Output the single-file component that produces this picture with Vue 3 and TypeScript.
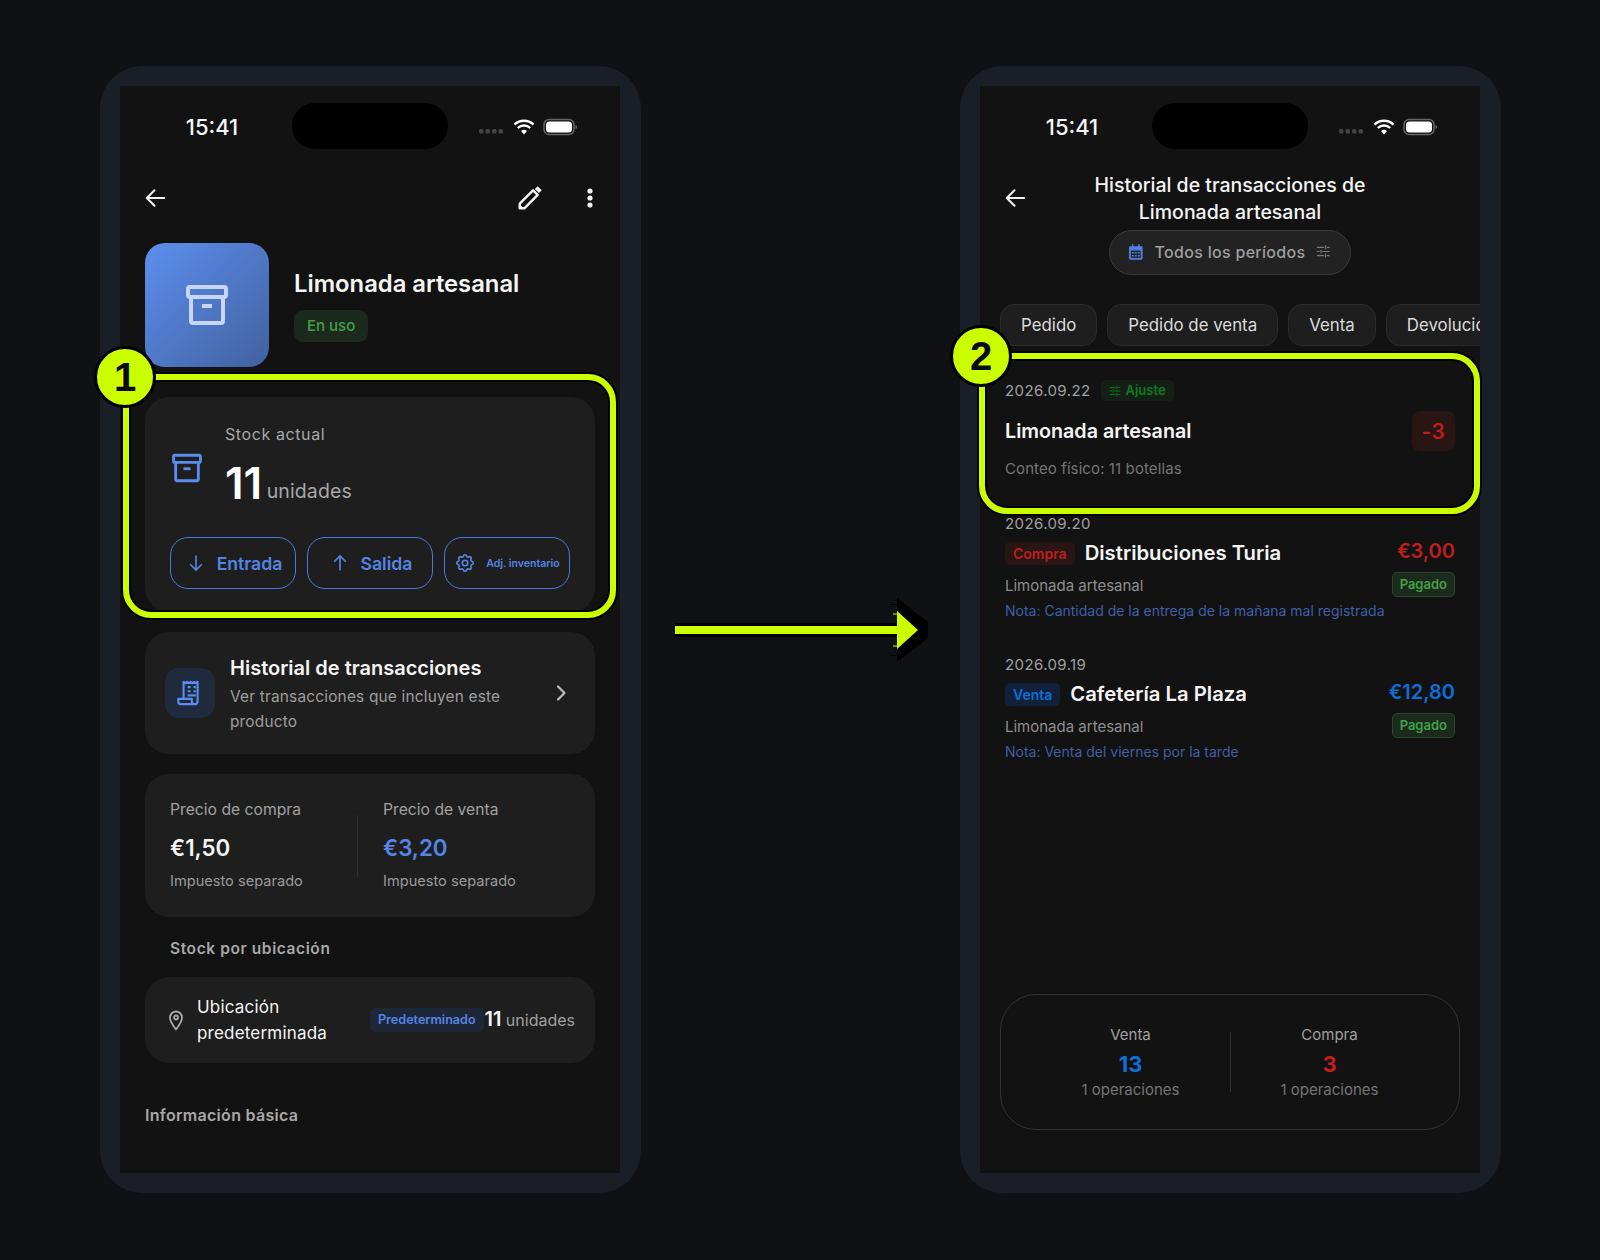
<script setup lang="ts">
// Dos pantallas del inventario con anotaciones encima
const tabs = ["Pedido", "Pedido de venta", "Venta", "Devolución"];

const moves = [
  {
    date: "2026.09.20",
    kind: "Compra",
    tone: "red",
    name: "Distribuciones Turia",
    amount: "€3,00",
    note: "Nota: Cantidad de la entrega de la mañana mal registrada",
  },
  {
    date: "2026.09.19",
    kind: "Venta",
    tone: "blue",
    name: "Cafetería La Plaza",
    amount: "€12,80",
    note: "Nota: Venta del viernes por la tarde",
  },
];

const totals = [
  { label: "Venta", value: "13", tone: "blue" },
  { label: "Compra", value: "3", tone: "red" },
];
</script>

<template>
  <div class="page">
    <svg class="sprites" width="0" height="0" aria-hidden="true">
      <symbol id="i-archive" viewBox="0 0 24 24" fill="none" stroke="currentColor" stroke-width="2" stroke-linejoin="round">
        <rect x="2.5" y="3" width="19" height="5" rx="1" />
        <path d="M4 8v12a1 1 0 0 0 1 1h14a1 1 0 0 0 1-1V8" />
        <path d="M9.5 12.5h5" />
      </symbol>
      <symbol id="i-back" viewBox="0 0 24 24" fill="none" stroke="currentColor" stroke-width="2.2" stroke-linecap="round" stroke-linejoin="round">
        <path d="M22 12H3M11.5 3.5 3 12l8.5 8.5" />
      </symbol>
      <symbol id="i-sliders" viewBox="0 0 16 16" fill="none" stroke="currentColor" stroke-width="1.3">
        <path d="M1 3.5h8M12 3.5h3M1 8h3M7 8h8M1 12.5h8M12 12.5h3" />
        <path d="M10.5 1.5v4M5.5 6v4M10.5 10.5v4" />
      </symbol>
      <symbol id="i-status" viewBox="0 0 98 18">
        <g fill="#444">
          <rect x="0" y="11" width="4.5" height="4.5" rx="1.5" />
          <rect x="6.5" y="11" width="4.5" height="4.5" rx="1.5" />
          <rect x="13" y="11" width="4.5" height="4.5" rx="1.5" />
          <rect x="19.5" y="11" width="4.5" height="4.5" rx="1.5" />
        </g>
        <g fill="none" stroke="#fff" stroke-width="2.4">
          <path d="M35.5 6.5a14 14 0 0 1 19 0" />
          <path d="M38.8 10a9 9 0 0 1 12.4 0" />
        </g>
        <path d="M45 16.5l-3-3.4a4.5 4.5 0 0 1 6 0z" fill="#fff" />
        <rect x="65" y="1.5" width="30" height="15" rx="5" fill="none" stroke="#666" stroke-width="1.5" />
        <rect x="67" y="3.5" width="26" height="11" rx="3.5" fill="#fff" />
        <path d="M96.5 7v4c1-.3 1.5-1 1.5-2s-.5-1.7-1.5-2z" fill="#666" />
      </symbol>
    </svg>

    <section class="phone">
      <div class="screen">
        <div class="status">
          <span class="time">15:41</span>
          <span class="island"></span>
          <span class="indicators"><svg width="98" height="18"><use href="#i-status" /></svg></span>
        </div>

        <div class="content">
          <header class="nav">
            <svg class="back" width="22" height="22"><use href="#i-back" /></svg>
            <svg class="pencil" width="26" height="26" viewBox="0 0 24 24" fill="none" stroke="#f2f2f2" stroke-width="2.2" stroke-linejoin="round">
              <path d="M2.5 21.5v-4.3L14.8 4.9l4.3 4.3L6.8 21.5z" />
              <path d="M2.5 21.5v-3l3 3z" fill="#f2f2f2" stroke-width="1" />
              <path d="M17.8 2.4l3.8 3.8" stroke-width="3.6" />
            </svg>
            <svg class="more" width="6" height="20" viewBox="0 0 6 20" fill="#f2f2f2">
              <circle cx="3" cy="3" r="2.6" />
              <circle cx="3" cy="10" r="2.6" />
              <circle cx="3" cy="17" r="2.6" />
            </svg>
          </header>

          <div class="product">
            <div class="tile"><svg width="48" height="48"><use href="#i-archive" /></svg></div>
            <div>
              <h1>Limonada artesanal</h1>
              <span class="in-use">En uso</span>
            </div>
          </div>

          <div class="card stock">
            <div class="stock-top">
              <svg class="stock-icon" width="34" height="34"><use href="#i-archive" /></svg>
              <div>
                <div class="stock-label">Stock actual</div>
                <div class="stock-count"><b>11</b> <span>unidades</span></div>
              </div>
            </div>
            <div class="actions">
              <button>
                <svg width="20" height="20" viewBox="0 0 24 24" fill="none" stroke="currentColor" stroke-width="2"><path d="M12 3v17M5 13.5l7 7 7-7" /></svg>
                Entrada
              </button>
              <button>
                <svg width="20" height="20" viewBox="0 0 24 24" fill="none" stroke="currentColor" stroke-width="2"><path d="M12 21V4M5 10.5l7-7 7 7" /></svg>
                Salida
              </button>
              <button class="adjust">
                <svg width="22" height="22" viewBox="0 0 24 24" fill="none" stroke="currentColor" stroke-width="1.8">
                  <path d="M10.325 4.317c.426-1.756 2.924-1.756 3.35 0a1.724 1.724 0 0 0 2.573 1.066c1.543-.94 3.31.826 2.37 2.37a1.724 1.724 0 0 0 1.065 2.572c1.756.426 1.756 2.924 0 3.35a1.724 1.724 0 0 0-1.066 2.573c.94 1.543-.826 3.31-2.37 2.37a1.724 1.724 0 0 0-2.572 1.065c-.426 1.756-2.924 1.756-3.35 0a1.724 1.724 0 0 0-2.573-1.066c-1.543.94-3.31-.826-2.37-2.37a1.724 1.724 0 0 0-1.065-2.572c-1.756-.426-1.756-2.924 0-3.35a1.724 1.724 0 0 0 1.066-2.573c-.94-1.543.826-3.31 2.37-2.37 1 .608 2.296.07 2.572-1.065z" />
                  <circle cx="12" cy="12" r="3" />
                </svg>
                Adj. inventario
              </button>
            </div>
          </div>

          <div class="card history">
            <div class="history-icon">
              <svg width="28" height="28" viewBox="0 0 24 24" fill="none" stroke="#5b8def" stroke-width="1.8" stroke-linejoin="round">
                <path d="M6.5 17V2.5l1.5 1 1.5-1 1.5 1 1.5-1 1.5 1 1.5-1 1.5 1 1.5-1v16.5a2.5 2.5 0 0 1-5 0V17H2v2.5A2 2 0 0 0 4 21.5h14" />
                <path d="M10 7h2.5M10 10.5h2.5M15 7h2M15 10.5h2M10 14h7" />
              </svg>
            </div>
            <div class="history-text">
              <h2>Historial de transacciones</h2>
              <p>Ver transacciones que incluyen este producto</p>
            </div>
            <svg class="chevron" width="14" height="18" viewBox="0 0 14 18" fill="none" stroke="#bdbdbd" stroke-width="2.2" stroke-linecap="round" stroke-linejoin="round">
              <path d="M4 2.5 10.5 9 4 15.5" />
            </svg>
          </div>

          <div class="card prices">
            <div class="price">
              <div class="price-label">Precio de compra</div>
              <div class="price-value">€1,50</div>
              <div class="price-note">Impuesto separado</div>
            </div>
            <i class="price-rule"></i>
            <div class="price">
              <div class="price-label">Precio de venta</div>
              <div class="price-value accent">€3,20</div>
              <div class="price-note">Impuesto separado</div>
            </div>
          </div>

          <h3 class="by-place">Stock por ubicación</h3>

          <div class="card place">
            <svg width="18" height="22" viewBox="0 0 18 22" fill="none" stroke="#a8a8a8" stroke-width="1.8">
              <path d="M9 20.5C5.5 16 3 12.8 3 8.5a6 6 0 0 1 12 0c0 4.3-2.5 7.5-6 12z" stroke-linejoin="round" />
              <circle cx="9" cy="8.5" r="2" />
            </svg>
            <div class="place-name">Ubicación predeterminada</div>
            <span class="place-tag">Predeterminado</span>
            <span class="place-count"><b>11</b> unidades</span>
          </div>

          <h3 class="basic">Información básica</h3>
        </div>
      </div>
    </section>

    <section class="phone">
      <div class="screen">
        <div class="status">
          <span class="time">15:41</span>
          <span class="island"></span>
          <span class="indicators"><svg width="98" height="18"><use href="#i-status" /></svg></span>
        </div>

        <header class="log-head">
          <svg class="log-back" width="22" height="22"><use href="#i-back" /></svg>
          <h2>Historial de transacciones de<br />Limonada artesanal</h2>
        </header>

        <div class="period">
          <svg width="16" height="16" viewBox="0 0 16 16" fill="#4f7fe0">
            <path d="M4 0h1.5v2h5V0H12v2h1.5A1.5 1.5 0 0 1 15 3.5v11a1.5 1.5 0 0 1-1.5 1.5h-11A1.5 1.5 0 0 1 1 14.5v-11A1.5 1.5 0 0 1 2.5 2H4z" />
            <path d="M3 6.5h10V14H3z" fill="#222" />
            <path d="M4 8h2v1.5H4zM7 8h2v1.5H7zM10 8h2v1.5h-2zM4 11h2v1.5H4zM7 11h2v1.5H7zM10 11h2v1.5h-2z" />
          </svg>
          <span>Todos los períodos</span>
          <svg class="period-end" width="15" height="15"><use href="#i-sliders" /></svg>
        </div>

        <div class="tabs">
          <span v-for="tab in tabs" :key="tab" class="tab">{{ tab }}</span>
        </div>

        <div class="moves">
          <article class="adjustment">
            <div class="adj-date">
              <span class="date">2026.09.22</span>
              <span class="adj-kind"><svg width="12" height="12"><use href="#i-sliders" /></svg>Ajuste</span>
            </div>
            <div class="adj-row">
              <strong>Limonada artesanal</strong>
              <span class="delta">-3</span>
            </div>
            <p>Conteo físico: 11 botellas</p>
          </article>

          <article v-for="move in moves" :key="move.date" class="move">
            <div class="date">{{ move.date }}</div>
            <div class="move-body">
              <div class="move-left">
                <div class="move-head">
                  <span class="kind" :class="move.tone">{{ move.kind }}</span>
                  <strong>{{ move.name }}</strong>
                </div>
                <div class="move-product">Limonada artesanal</div>
                <div class="move-note">{{ move.note }}</div>
              </div>
              <div class="move-right">
                <span class="amount" :class="move.tone">{{ move.amount }}</span>
                <span class="paid">Pagado</span>
              </div>
            </div>
          </article>
        </div>

        <footer class="summary">
          <div v-for="t in totals" :key="t.label" class="total">
            <div class="total-label">{{ t.label }}</div>
            <div class="total-value" :class="t.tone">{{ t.value }}</div>
            <div class="total-ops">1 operaciones</div>
          </div>
          <i class="summary-rule"></i>
        </footer>
      </div>
    </section>

    <!-- anotaciones -->
    <div class="mark mark-a"></div>
    <div class="mark mark-b"></div>
    <div class="pin pin-a">1</div>
    <div class="pin pin-b">2</div>
    <svg class="arrow" width="254" height="64" viewBox="0 0 254 64">
      <path d="M0 25H222V0L253 24V40L222 64V39H0Z" fill="#000" />
      <path d="M215 6.5h7M215 57.5h7" stroke="#000" />
      <path d="M218 16h4M218 48h4" stroke="#cbff00" />
      <path d="M0 28H222V13L243 32L222 51V36H0Z" fill="#cbff00" />
    </svg>
  </div>
</template>

<style>
body {
  background: #0f1115;
}
</style>

<style scoped>
.page {
  position: relative;
  width: 1600px;
  height: 1260px;
  box-sizing: border-box;
  padding: 66px 0 0 100px;
  display: flex;
  gap: 319px;
  background: #0f1115;
  overflow: hidden;
  font-family: Inter, "Noto Sans", sans-serif;
  color: #f5f5f5;
}
.sprites {
  position: absolute;
}
h1,
h2,
h3,
p {
  margin: 0;
}
.phone {
  width: 541px;
  height: 1127px;
  box-sizing: border-box;
  padding: 20px 21px 20px 20px;
  background: #1a1e26;
  border-radius: 42px;
}
.screen {
  height: 100%;
  display: flex;
  flex-direction: column;
  background: #121212;
  overflow: hidden;
}
.status {
  display: grid;
  grid-template-columns: 172px 156px 172px;
  align-items: center;
  height: 46px;
  margin-top: 17px;
  flex: none;
}
.time {
  padding: 2px 0 0 12px;
  text-align: center;
  font-size: 22px;
  font-weight: 500;
}
.island {
  height: 46px;
  background: #000;
  border-radius: 23px;
}
.indicators {
  display: flex;
  padding: 1px 0 0 31px;
}
.content {
  padding: 0 25px;
}
.nav {
  display: flex;
  align-items: center;
  height: 48px;
  margin-top: 25px;
}
.back {
  color: #f2f2f2;
  margin-left: -1px;
}
.pencil {
  margin-left: auto;
  margin-right: -2px;
}
.more {
  margin: 0 2px 0 46px;
}
.product {
  display: flex;
  align-items: center;
  gap: 25px;
  margin-top: 21px;
}
.tile {
  width: 124px;
  height: 124px;
  display: flex;
  align-items: center;
  justify-content: center;
  border-radius: 20px;
  background: linear-gradient(135deg, #5c8fee, #41619f);
  color: #c9d6f3;
}
h1 {
  font-size: 23.8px;
  font-weight: 600;
  line-height: 30px;
}
.in-use {
  display: inline-block;
  margin-top: 11px;
  padding: 0 13px;
  line-height: 32px;
  border-radius: 9px;
  background: #1c2a1e;
  color: #43a047;
  font-size: 15px;
  font-weight: 500;
}
.card {
  background: #1e1e1e;
  border-radius: 24px;
}
.stock {
  margin-top: 30px;
  padding: 26px 25px 23px;
}
.stock-top {
  display: flex;
  align-items: flex-start;
  gap: 21px;
}
.stock-icon {
  color: #5b8def;
  margin: 28px 0 0;
}
.stock-label {
  font-size: 16px;
  line-height: 22px;
  letter-spacing: 0.6px;
  color: #a8a8a8;
}
.stock-count {
  margin-top: 11px;
  line-height: 54px;
}
.stock-count b {
  font-size: 44px;
  font-weight: 600;
  color: #fff;
}
.stock-count span {
  font-size: 19.5px;
  letter-spacing: 0.1px;
  vertical-align: 1px;
  color: #a8a8a8;
}
.actions {
  display: grid;
  grid-template-columns: repeat(3, 126px);
  gap: 11px;
  margin-top: 17px;
}
.actions button {
  height: 52px;
  padding: 0 0 0 2px;
  display: flex;
  align-items: center;
  justify-content: center;
  gap: 11px;
  background: none;
  border: 1.5px solid #4a7bdc;
  border-radius: 18px;
  color: #5585e4;
  font: 600 17.6px Inter, sans-serif;
}
.actions .adjust {
  gap: 10px;
  padding: 0;
  font-size: 10.5px;
}
.history {
  display: flex;
  align-items: center;
  margin-top: 20px;
  padding: 0 20px;
  height: 122px;
}
.history-icon {
  width: 50px;
  height: 50px;
  flex: none;
  display: flex;
  align-items: center;
  justify-content: center;
  border-radius: 14px;
  background: #1f2a3d;
}
.history-text {
  width: 300px;
  margin-left: 15px;
  padding-top: 2px;
}
.history-text h2 {
  font-size: 20px;
  font-weight: 600;
  line-height: 26px;
}
.history-text p {
  margin-top: 3px;
  font-size: 15.4px;
  line-height: 25px;
  letter-spacing: 0.2px;
  color: #9e9e9e;
}
.chevron {
  margin-left: auto;
  margin-right: 7px;
}
.prices {
  display: flex;
  align-items: center;
  margin-top: 20px;
  height: 143px;
  padding: 0 25px;
}
.price {
  flex: 1;
  margin-bottom: 2px;
}
.price:last-child {
  padding-left: 25px;
}
.price-rule {
  width: 1px;
  height: 62px;
  background: #303030;
}
.price-label {
  font-size: 15.7px;
  line-height: 22px;
  color: #a0a0a0;
}
.price-value {
  margin-top: 13px;
  font-size: 22.3px;
  font-weight: 600;
  line-height: 28px;
}
.accent {
  color: #5585e4;
}
.price-note {
  margin-top: 9px;
  font-size: 14.6px;
  line-height: 20px;
  color: #9a9a9a;
}
.by-place {
  margin: 21px 0 0 25px;
  font-size: 15.5px;
  font-weight: 600;
  line-height: 22px;
  letter-spacing: 0.6px;
  color: #a8a8a8;
}
.place {
  display: flex;
  align-items: center;
  height: 86px;
  margin-top: 17px;
  padding: 0 20px 0 22px;
}
.place-name {
  width: 173px;
  margin-left: 12px;
  font-size: 17px;
  line-height: 26px;
  letter-spacing: 0.2px;
  flex: none;
}
.place-tag {
  padding: 0 8px;
  line-height: 24px;
  border-radius: 6px;
  background: #1e2738;
  color: #5585e4;
  font-size: 12.6px;
  font-weight: 600;
  white-space: nowrap;
}
.place-count {
  margin: 0 0 2px auto;
  font-size: 16px;
  color: #a0a0a0;
  white-space: nowrap;
}
.place-count b {
  font-size: 20px;
  font-weight: 600;
  color: #f5f5f5;
}
.basic {
  margin-top: 41px;
  font-size: 16px;
  font-weight: 600;
  line-height: 22px;
  letter-spacing: 0.3px;
  color: #a8a8a8;
}
.log-head {
  position: relative;
  margin-top: 23px;
  height: 54px;
  flex: none;
}
.log-back {
  position: absolute;
  left: 24px;
  top: 15px;
  color: #f2f2f2;
}
.log-head h2 {
  text-align: center;
  font-size: 19.5px;
  font-weight: 500;
  line-height: 27px;
}
.period {
  align-self: center;
  flex: none;
  width: 242px;
  height: 45px;
  box-sizing: border-box;
  margin-top: 4px;
  padding: 0 19px 2px 18px;
  display: flex;
  align-items: center;
  gap: 11px;
  border: 1px solid #3a3a3a;
  border-radius: 23px;
  background: #222;
  color: #9e9e9e;
  font-size: 16px;
  font-weight: 500;
  letter-spacing: 0.3px;
  white-space: nowrap;
}
.period-end {
  margin-left: auto;
  color: #7a7a7a;
}
.tabs {
  display: flex;
  gap: 10px;
  flex: none;
  margin-top: 29px;
  padding-left: 20px;
}
.tab {
  flex: none;
  height: 42px;
  box-sizing: border-box;
  padding: 0 20px;
  line-height: 40px;
  border: 1px solid #2a2a2a;
  border-radius: 14px;
  background: #1e1e1e;
  font-size: 16.85px;
  color: #dcdcdc;
}
.moves {
  padding: 0 25px;
}
.date {
  font-size: 15px;
  line-height: 20px;
  letter-spacing: 0.4px;
  color: #a0a0a0;
}
.adjustment {
  padding-top: 34px;
}
.adj-date {
  display: flex;
  align-items: center;
  gap: 10px;
}
.adj-kind {
  display: inline-flex;
  align-items: center;
  gap: 5px;
  padding: 0 8px;
  line-height: 21px;
  border-radius: 5px;
  background: #142016;
  color: #127a1f;
  font-size: 13px;
  font-weight: 600;
}
.adj-row {
  display: flex;
  align-items: center;
  justify-content: space-between;
  margin-top: 10px;
}
.adj-row strong,
.move-head strong {
  font-weight: 600;
}
.adj-row strong {
  font-size: 19.7px;
}
.delta {
  width: 43px;
  line-height: 39px;
  padding-top: 1px;
  text-align: center;
  border-radius: 8px;
  background: #2a1515;
  color: #bf1e1e;
  font-size: 21px;
  font-weight: 600;
  letter-spacing: 0.5px;
}
.adjustment p {
  margin-top: 8px;
  font-size: 15px;
  line-height: 20px;
  letter-spacing: 0.1px;
  color: #757575;
}
.move {
  padding-top: 35px;
}
.move + .move {
  padding-top: 34px;
}
.move-body {
  display: flex;
  justify-content: space-between;
  margin-top: 4px;
}
.move-head {
  display: flex;
  align-items: center;
  gap: 10px;
  margin-top: 2px;
}
.move-head strong {
  font-size: 20.3px;
  line-height: 26px;
}
.kind {
  padding: 0 8px;
  line-height: 23px;
  border-radius: 5px;
  font-size: 14px;
  font-weight: 600;
}
.kind.red {
  background: #2a1515;
  color: #bf1e1e;
}
.kind.blue {
  background: #12213a;
  color: #0d6fd6;
}
.move-product {
  margin-top: 10px;
  font-size: 15px;
  line-height: 20px;
  color: #8e8e8e;
}
.move-note {
  margin-top: 5px;
  font-size: 14px;
  line-height: 20px;
  color: #3f5fa8;
  white-space: nowrap;
}
.move-right {
  display: flex;
  flex-direction: column;
  align-items: flex-end;
  gap: 8px;
}
.amount {
  font-size: 20px;
  font-weight: 600;
  line-height: 26px;
}
.amount.red,
.total-value.red {
  color: #bf1e1e;
}
.amount.blue,
.total-value.blue {
  color: #0d6fd6;
}
.paid {
  padding: 0 7px;
  line-height: 23px;
  border: 1px solid #234a2a;
  border-radius: 5px;
  background: #1c2a1e;
  color: #43a047;
  font-size: 13px;
  font-weight: 600;
}
.summary {
  position: relative;
  display: flex;
  align-items: center;
  flex: none;
  height: 136px;
  box-sizing: border-box;
  margin: auto 20px 43px;
  padding: 0 30px;
  border: 1px solid #333;
  border-radius: 36px;
}
.total {
  flex: 1;
  padding-top: 1px;
  text-align: center;
}
.total-label {
  font-size: 15px;
  line-height: 20px;
  color: #a0a0a0;
}
.total-value {
  margin-top: 5px;
  font-size: 22px;
  font-weight: 700;
  line-height: 28px;
}
.total-ops {
  margin-top: 2px;
  font-size: 15px;
  line-height: 20px;
  color: #757575;
}
.summary-rule {
  position: absolute;
  left: 50%;
  top: 37px;
  width: 1px;
  height: 60px;
  background: #303030;
}
.mark {
  position: absolute;
  box-sizing: border-box;
  border: 6px solid #cbff00;
  border-radius: 28px;
  box-shadow: 0 0 0 2px #000, inset 0 0 0 2px #000;
}
.mark-a {
  left: 123px;
  top: 374px;
  width: 493px;
  height: 244px;
}
.mark-b {
  left: 979px;
  top: 353px;
  width: 501px;
  height: 161px;
}
.pin {
  position: absolute;
  width: 56px;
  height: 56px;
  box-sizing: content-box;
  border: 3px solid #000;
  border-radius: 50%;
  background: #cbff00;
  color: #0a0a0a;
  font: 700 40px/56px "Liberation Sans", Arial, sans-serif;
  text-align: center;
}
.pin-a {
  left: 94px;
  top: 346px;
}
.pin-b {
  left: 950px;
  top: 325px;
}
.arrow {
  position: absolute;
  left: 675px;
  top: 598px;
}
</style>
